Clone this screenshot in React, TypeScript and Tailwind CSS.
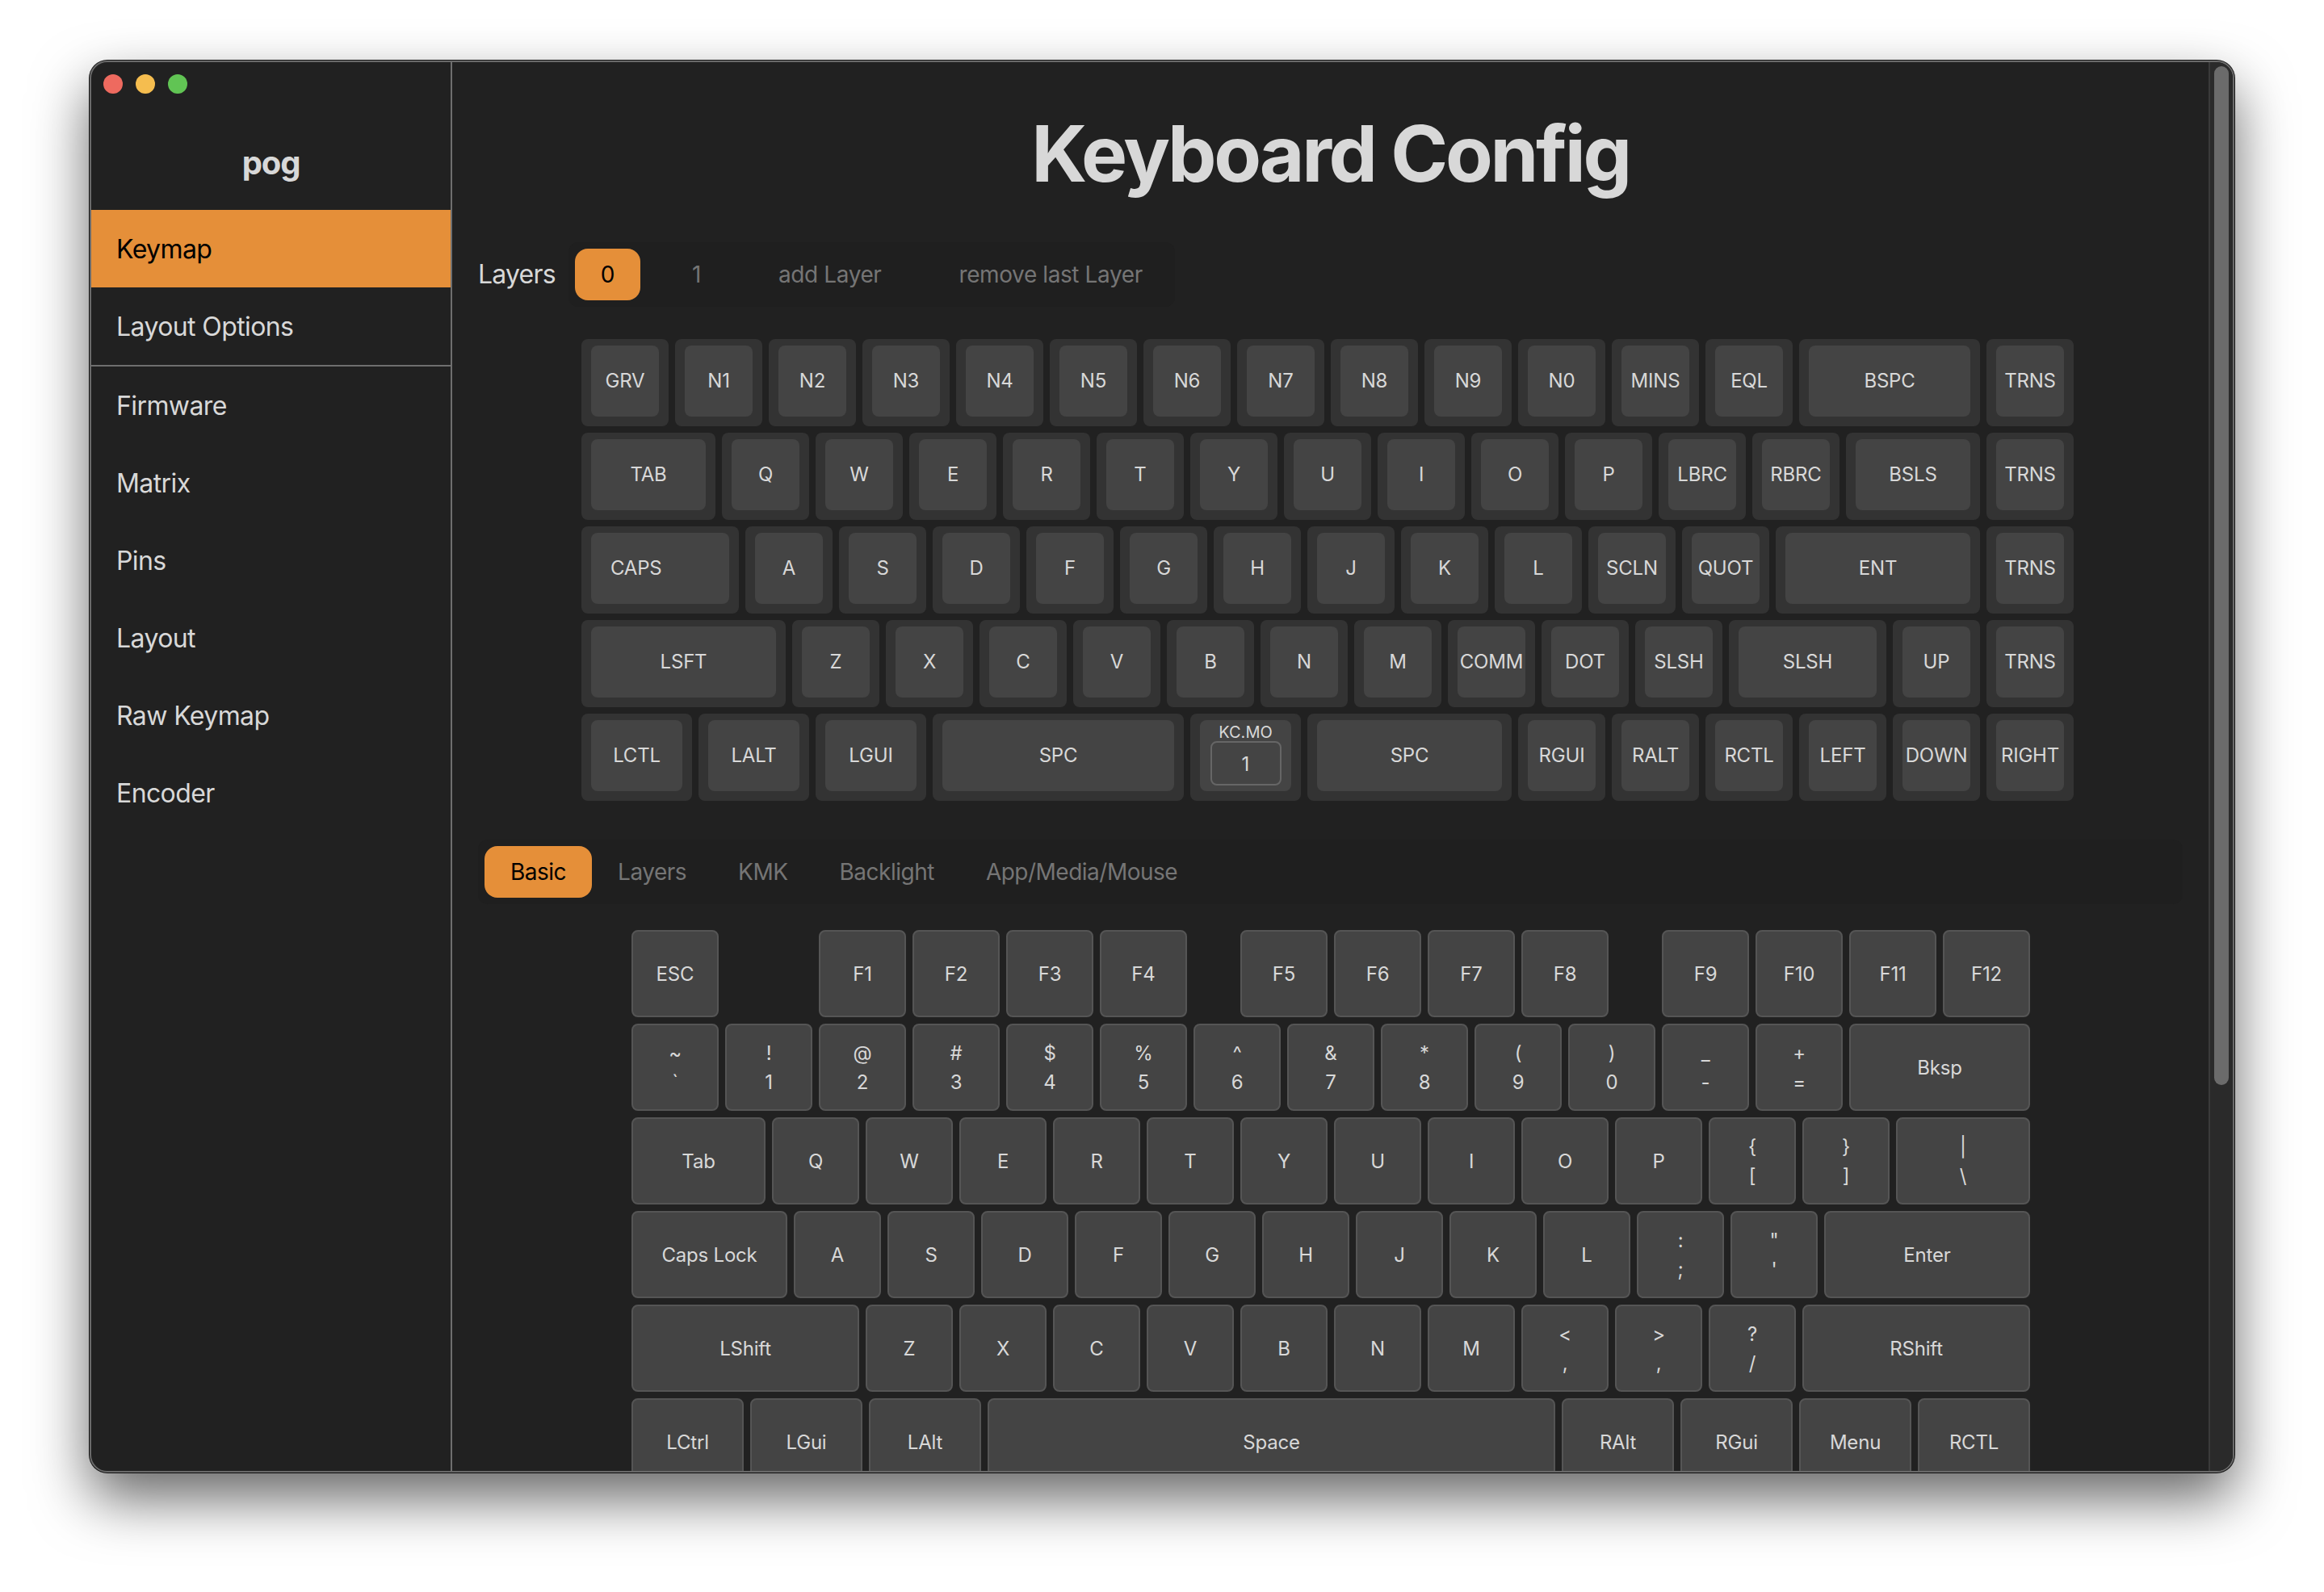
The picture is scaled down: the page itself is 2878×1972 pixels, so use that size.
const topRows: [string, string][][] = [
  [['GRV', '1'], ['N1', '1'], ['N2', '1'], ['N3', '1'], ['N4', '1'], ['N5', '1'], ['N6', '1'], ['N7', '1'], ['N8', '1'], ['N9', '1'], ['N0', '1'], ['MINS', '1'], ['EQL', '1'], ['BSPC', '2'], ['TRNS', '1']],
  [['TAB', '1.5'], ['Q', '1'], ['W', '1'], ['E', '1'], ['R', '1'], ['T', '1'], ['Y', '1'], ['U', '1'], ['I', '1'], ['O', '1'], ['P', '1'], ['LBRC', '1'], ['RBRC', '1'], ['BSLS', '1.5'], ['TRNS', '1']],
  [['CAPS', '1.75'], ['A', '1'], ['S', '1'], ['D', '1'], ['F', '1'], ['G', '1'], ['H', '1'], ['J', '1'], ['K', '1'], ['L', '1'], ['SCLN', '1'], ['QUOT', '1'], ['ENT', '2.25'], ['TRNS', '1']],
  [['LSFT', '2.25'], ['Z', '1'], ['X', '1'], ['C', '1'], ['V', '1'], ['B', '1'], ['N', '1'], ['M', '1'], ['COMM', '1'], ['DOT', '1'], ['SLSH', '1'], ['SLSH', '1.75'], ['UP', '1'], ['TRNS', '1']],
  [['LCTL', '1.25'], ['LALT', '1.25'], ['LGUI', '1.25'], ['SPC', '2.75'], ['KC.MO', '1.25'], ['SPC', '2.25'], ['RGUI', '1'], ['RALT', '1'], ['RCTL', '1'], ['LEFT', '1'], ['DOWN', '1'], ['RIGHT', '1']],
]

const basicRows: [string, string][][] = [
  [['ESC', '1'], ['', 'gap1'], ['F1', '1'], ['F2', '1'], ['F3', '1'], ['F4', '1'], ['', 'gap.5'], ['F5', '1'], ['F6', '1'], ['F7', '1'], ['F8', '1'], ['', 'gap.5'], ['F9', '1'], ['F10', '1'], ['F11', '1'], ['F12', '1']],
  [['~|`', '1'], ['!|1', '1'], ['@|2', '1'], ['#|3', '1'], ['$|4', '1'], ['%|5', '1'], ['^|6', '1'], ['&|7', '1'], ['*|8', '1'], ['(|9', '1'], [')|0', '1'], ['_|-', '1'], ['+|=', '1'], ['Bksp', '2']],
  [['Tab', '1.5'], ['Q', '1'], ['W', '1'], ['E', '1'], ['R', '1'], ['T', '1'], ['Y', '1'], ['U', '1'], ['I', '1'], ['O', '1'], ['P', '1'], ['{|[', '1'], ['}|]', '1'], ['pipe', '1.5']],
  [['Caps Lock', 'capslock'], ['A', '1'], ['S', '1'], ['D', '1'], ['F', '1'], ['G', '1'], ['H', '1'], ['J', '1'], ['K', '1'], ['L', '1'], [':|;', '1'], ['"|\'', '1'], ['Enter', 'enter']],
  [['LShift', '2.5'], ['Z', '1'], ['X', '1'], ['C', '1'], ['V', '1'], ['B', '1'], ['N', '1'], ['M', '1'], ['<|,', '1'], ['>|,', '1'], ['?|/', '1'], ['RShift', '2.5']],
  [['LCtrl', 'mod'], ['LGui', 'mod'], ['LAlt', 'mod'], ['Space', 'space'], ['RAlt', 'mod'], ['RGui', 'mod'], ['Menu', 'mod'], ['RCTL', 'mod']],
]

const widths: Record<string, string> = {
  '1': 'w-[108px]',
  '1.25': 'w-[137px]',
  '1.5': 'w-[166px]',
  '1.75': 'w-[195px]',
  '2': 'w-[224px]',
  '2.25': 'w-[253px]',
  '2.5': 'w-[282px]',
  '2.75': 'w-[311px]',
  capslock: 'w-[193px]',
  enter: 'w-[255px]',
  mod: 'w-[139px]',
  space: 'w-[703px]',
  'gap1': 'w-[108px]',
  'gap.5': 'w-[50px]',
}

const sideTop = ['Keymap', 'Layout Options']
const sideBottom = ['Firmware', 'Matrix', 'Pins', 'Layout', 'Raw Keymap', 'Encoder']

function ConfigKey({ label, size }: { label: string; size: string }) {
  return (
    <div className={`${widths[size]} h-[108px] shrink-0 rounded-lg bg-[#333333] pt-2 px-3 pb-3`}>
      {/* the CAPS legend sits left of centre in the picture */}
      <div className={`h-full rounded-lg bg-[#444444] flex items-center pb-px text-2xl tracking-[-0.2px] text-[#d8d8d8] ${label === 'CAPS' ? 'justify-start pl-6' : 'justify-center'}`}>
        {label}
      </div>
    </div>
  )
}

function LayerKey({ size }: { size: string }) {
  return (
    <div className={`${widths[size]} h-[108px] shrink-0 rounded-lg bg-[#333333] pt-2 px-3 pb-3 text-[#d8d8d8]`}>
      <div className="h-full rounded-lg bg-[#444444] flex flex-col items-center">
        <div className="h-[26px] pt-[4px] text-xl leading-[22px]">KC.MO</div>
        <div className="w-[88px] h-[55px] rounded-lg border-2 border-[#666666] flex items-center justify-center pt-[3px] text-2xl">1</div>
      </div>
    </div>
  )
}

function PickKey({ label, size }: { label: string; size: string }) {
  if (size.startsWith('gap')) return <div className={`${widths[size]} shrink-0`} />
  const base = `${widths[size]} h-[108px] shrink-0 rounded-lg border-2 border-[#555555] bg-[#444444] flex flex-col items-center justify-center pt-[2px] text-2xl tracking-[-0.2px] text-[#d8d8d8]`
  if (label === 'pipe') {
    return (
      <div className={base}>
        <span className="leading-9">|</span>
        <span className="leading-9">\</span>
      </div>
    )
  }
  const split = label.length === 3 && label[1] === '|'
  if (split) {
    return (
      <div className={base}>
        <span className="leading-9">{label[0]}</span>
        <span className="leading-9">{label[2]}</span>
      </div>
    )
  }
  return <div className={base}>{label}</div>
}

export default function App() {
  return (
    <div className="w-[2878px] h-[1972px] bg-white pt-[75px] pl-[111px] overflow-hidden font-['Inter',sans-serif]">
      <div className="w-[2656px] h-[1749px] flex overflow-hidden rounded-[22px] bg-[#212121] border-2 border-[#6a6a6a] shadow-[0_32px_70px_rgba(0,0,0,0.6),0_0_0_1px_#1a1a1a]">
        {/* Sidebar */}
        <aside className="w-[447px] shrink-0 border-r-2 border-[#6f6f6f]">
          <div className="h-[58px] pl-[15px] pt-[15px] flex gap-4">
            <span className="w-6 h-6 rounded-full bg-[#ee6a5f]" />
            <span className="w-6 h-6 rounded-full bg-[#f5bd4f]" />
            <span className="w-6 h-6 rounded-full bg-[#61c454]" />
          </div>
          <div className="h-[125px] flex items-center justify-center text-[40px] font-bold tracking-[-1.2px] text-[#d8d8d8] pt-[8px]">pog</div>
          <div className="border-b-2 border-[#6f6f6f]">
            {sideTop.map((item, i) => (
              <div
                key={item}
                className={`h-24 flex items-center pl-[31px] pt-[2px] text-[32px] tracking-[-0.6px] ${i === 0 ? 'bg-[#e58f39] text-black' : 'text-[#d8d8d8]'}`}
              >
                {item}
              </div>
            ))}
          </div>
          {sideBottom.map((item) => (
            <div key={item} className="h-24 flex items-center pl-[31px] pt-[2px] text-[32px] tracking-[-0.6px] text-[#d8d8d8]">
              {item}
            </div>
          ))}
        </aside>

        {/* Main */}
        <main className="flex-1 min-w-0 overflow-hidden">
          <h1 className="h-[223px] pt-[2px] flex items-center justify-center text-[96px] font-bold tracking-[-3.3px] text-[#d8d8d8]">Keyboard Config</h1>

          <div className="flex items-center gap-4 pl-8">
            <span className="text-[32px] tracking-[-0.8px] text-[#d8d8d8]">Layers</span>
            <div className="flex items-center gap-8 h-20 p-2 rounded-xl bg-[#1f1f1f] text-[28px] tracking-[-0.4px] text-[#757575]">
              <div className="h-16 px-8 flex items-center rounded-2xl bg-[#e58f39] text-black">0</div>
              <div className="h-16 px-8 flex items-center">1</div>
              <div className="h-16 px-8 flex items-center">add Layer</div>
              <div className="h-16 px-8 flex items-center">remove last Layer</div>
            </div>
          </div>

          <div className="mt-10 ml-[160px] flex flex-col gap-2">
            {topRows.map((row, r) => (
              <div key={r} className="flex gap-2">
                {row.map(([label, size], i) =>
                  label === 'KC.MO' ? <LayerKey key={i} size={size} /> : <ConfigKey key={i} label={label} size={size} />
                )}
              </div>
            ))}
          </div>

          <div className="mt-12 mx-8 h-20 p-2 flex items-center rounded-xl bg-[#1f1f1f] text-[28px] tracking-[-0.5px] text-[#757575]">
            <div className="h-16 px-8 flex items-center rounded-2xl bg-[#e58f39] text-black">Basic</div>
            <div className="h-16 px-8 flex items-center">Layers</div>
            <div className="h-16 px-8 flex items-center">KMK</div>
            <div className="h-16 px-8 flex items-center">Backlight</div>
            <div className="h-16 px-8 flex items-center">App/Media/Mouse</div>
          </div>

          <div className="mt-8 ml-[222px] flex flex-col gap-2">
            {basicRows.map((row, r) => (
              <div key={r} className="flex gap-2">
                {row.map(([label, size], i) => (
                  <PickKey key={i} label={label} size={size} />
                ))}
              </div>
            ))}
          </div>
        </main>

        {/* Scrollbar */}
        <div className="w-[30px] shrink-0 bg-[#2a2a2a] border-l-2 border-[#3a3a3a] pl-[5px] pt-[5px]">
          <div className="w-[18px] h-[1262px] rounded-full bg-[#6b6b6b]" />
        </div>
      </div>
    </div>
  )
}
